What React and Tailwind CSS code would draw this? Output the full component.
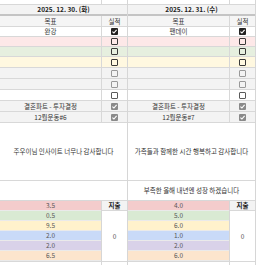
const days = [
  {
    date: '2025. 12. 30. (화)',
    goals: ['완강', '', '', '', '', '', '', '결혼파트 - 투자결정', '12월운동#6'],
    note: '주우이님 인사이트 너무나 감사합니다',
    note2: '',
    hours: ['3.5', '0.5', '9.5', '2.0', '2.0', '6.5'],
    spend: '0',
  },
  {
    date: '2025. 12. 31. (수)',
    goals: ['팬데이', '', '', '', '', '', '', '결혼파트 - 투자결정', '12월운동#7'],
    note: '가족들과 함께한 시간 행복하고 감사합니다',
    note2: '부족한 올해 내년엔 성장 하겠습니다',
    hours: ['4.0', '5.0', '6.0', '1.0', '2.0', '6.0'],
    spend: '0',
  },
];

// row look: background, height, checkbox kind
const rows = [
  { bg: 'bg-white', h: 'h-[10px]', box: 'dark-on' },
  { bg: 'bg-[#fde8e8]', h: 'h-[10px]', box: 'dark' },
  { bg: 'bg-[#e6efdf]', h: 'h-[10px]', box: 'dark' },
  { bg: 'bg-[#fff8e0]', h: 'h-[11px]', box: 'dark' },
  { bg: 'bg-[#f3f3f3]', h: 'h-[11px]', box: 'light' },
  { bg: 'bg-[#f3f3f3]', h: 'h-[11px]', box: 'light' },
  { bg: 'bg-white', h: 'h-[11px]', box: 'mid' },
  { bg: 'bg-[#f3f3f3]', h: 'h-[11px]', box: 'gray-on' },
  { bg: 'bg-[#f3f3f3]', h: 'h-[11px]', box: 'gray-on' },
];

const barColors = [
  'bg-[#f4cccc]',
  'bg-[#d9ead3]',
  'bg-[#fff2cc]',
  'bg-[#c9daf8]',
  'bg-[#d9d2e9]',
  'bg-[#fce5cd]',
];

function Check() {
  return (
    <svg width="7" height="7" viewBox="0 0 7 7" fill="none">
      <path d="M1.4 3.6 L2.9 5 L5.6 1.8" stroke="white" strokeWidth="1.1" />
    </svg>
  );
}

function Box({ kind }) {
  if (kind === 'dark-on') {
    return (
      <div className="w-[7px] h-[7px] rounded-[1px] bg-[#222]">
        <Check />
      </div>
    );
  }
  if (kind === 'gray-on') {
    return (
      <div className="w-[7px] h-[7px] rounded-[1px] bg-[#8a8a8a]">
        <Check />
      </div>
    );
  }
  const border = {
    dark: 'border-[#3a3a3a]',
    mid: 'border-[#5a5a5a]',
    light: 'border-[#999]',
  }[kind];
  return <div className={`w-[7px] h-[7px] rounded-[1px] border ${border}`} />;
}

function Day({ day }) {
  return (
    <div className="w-[128px] flex flex-col border-r border-[#d6d6d6]">
      <div className="h-[5px] flex border-b border-[#d8d8d8]">
        <div className="w-[102px] border-r border-[#d8d8d8]" />
      </div>
      <div className="h-[11px] flex items-center justify-center bg-[#f3f3f3] border-b-2 border-[#c4c4c4] font-bold text-[#222]">
        {day.date}
      </div>
      <div className="h-[11px] flex bg-[#f5f5f5] border-b border-[#d8d8d8] text-[#333]">
        <div className="w-[102px] flex items-center justify-center border-r border-[#d8d8d8]">목표</div>
        <div className="flex-1 flex items-center justify-center">실적</div>
      </div>
      {rows.map((r, i) => (
        <div key={i} className={`${r.h} ${r.bg} flex border-b border-[#d8d8d8] text-[#333]`}>
          <div className="w-[102px] flex items-center justify-center border-r border-[#d8d8d8]">
            {day.goals[i]}
          </div>
          <div className="flex-1 flex items-center justify-center">
            <Box kind={r.box} />
          </div>
        </div>
      ))}
      <div className="h-[58px] flex items-center justify-center border-b border-[#d8d8d8] text-[#333]">
        {day.note}
      </div>
      <div className="h-[20px] flex items-center justify-center border-b border-[#d8d8d8] text-[#333]">
        {day.note2}
      </div>
      <div className="h-[60px] flex">
        <div className="w-[102px] flex flex-col border-r border-[#d6d6d6]">
          {day.hours.map((h, i) => (
            <div
              key={i}
              className={`h-[10px] ${barColors[i]} flex items-center justify-center border-b border-[#eaeaea] text-[#555]`}
            >
              {h}
            </div>
          ))}
        </div>
        <div className="flex-1 flex flex-col">
          <div className="h-[10px] flex items-center justify-center bg-[#f3f3f3] border-b border-[#d8d8d8] font-bold text-[#222]">
            지출
          </div>
          <div className="flex-1 flex items-center justify-center text-[#555]">{day.spend}</div>
        </div>
      </div>
      <div className="h-[4px] flex border-t border-[#d8d8d8]">
        <div className="w-[102px] border-r border-[#d8d8d8]" />
      </div>
    </div>
  );
}

export default function App() {
  return (
    <div className="w-[256px] h-[265px] overflow-hidden bg-white flex text-[6.5px] leading-none font-['Noto_Sans_CJK_KR',sans-serif]">
      {days.map((d) => (
        <Day key={d.date} day={d} />
      ))}
    </div>
  );
}
